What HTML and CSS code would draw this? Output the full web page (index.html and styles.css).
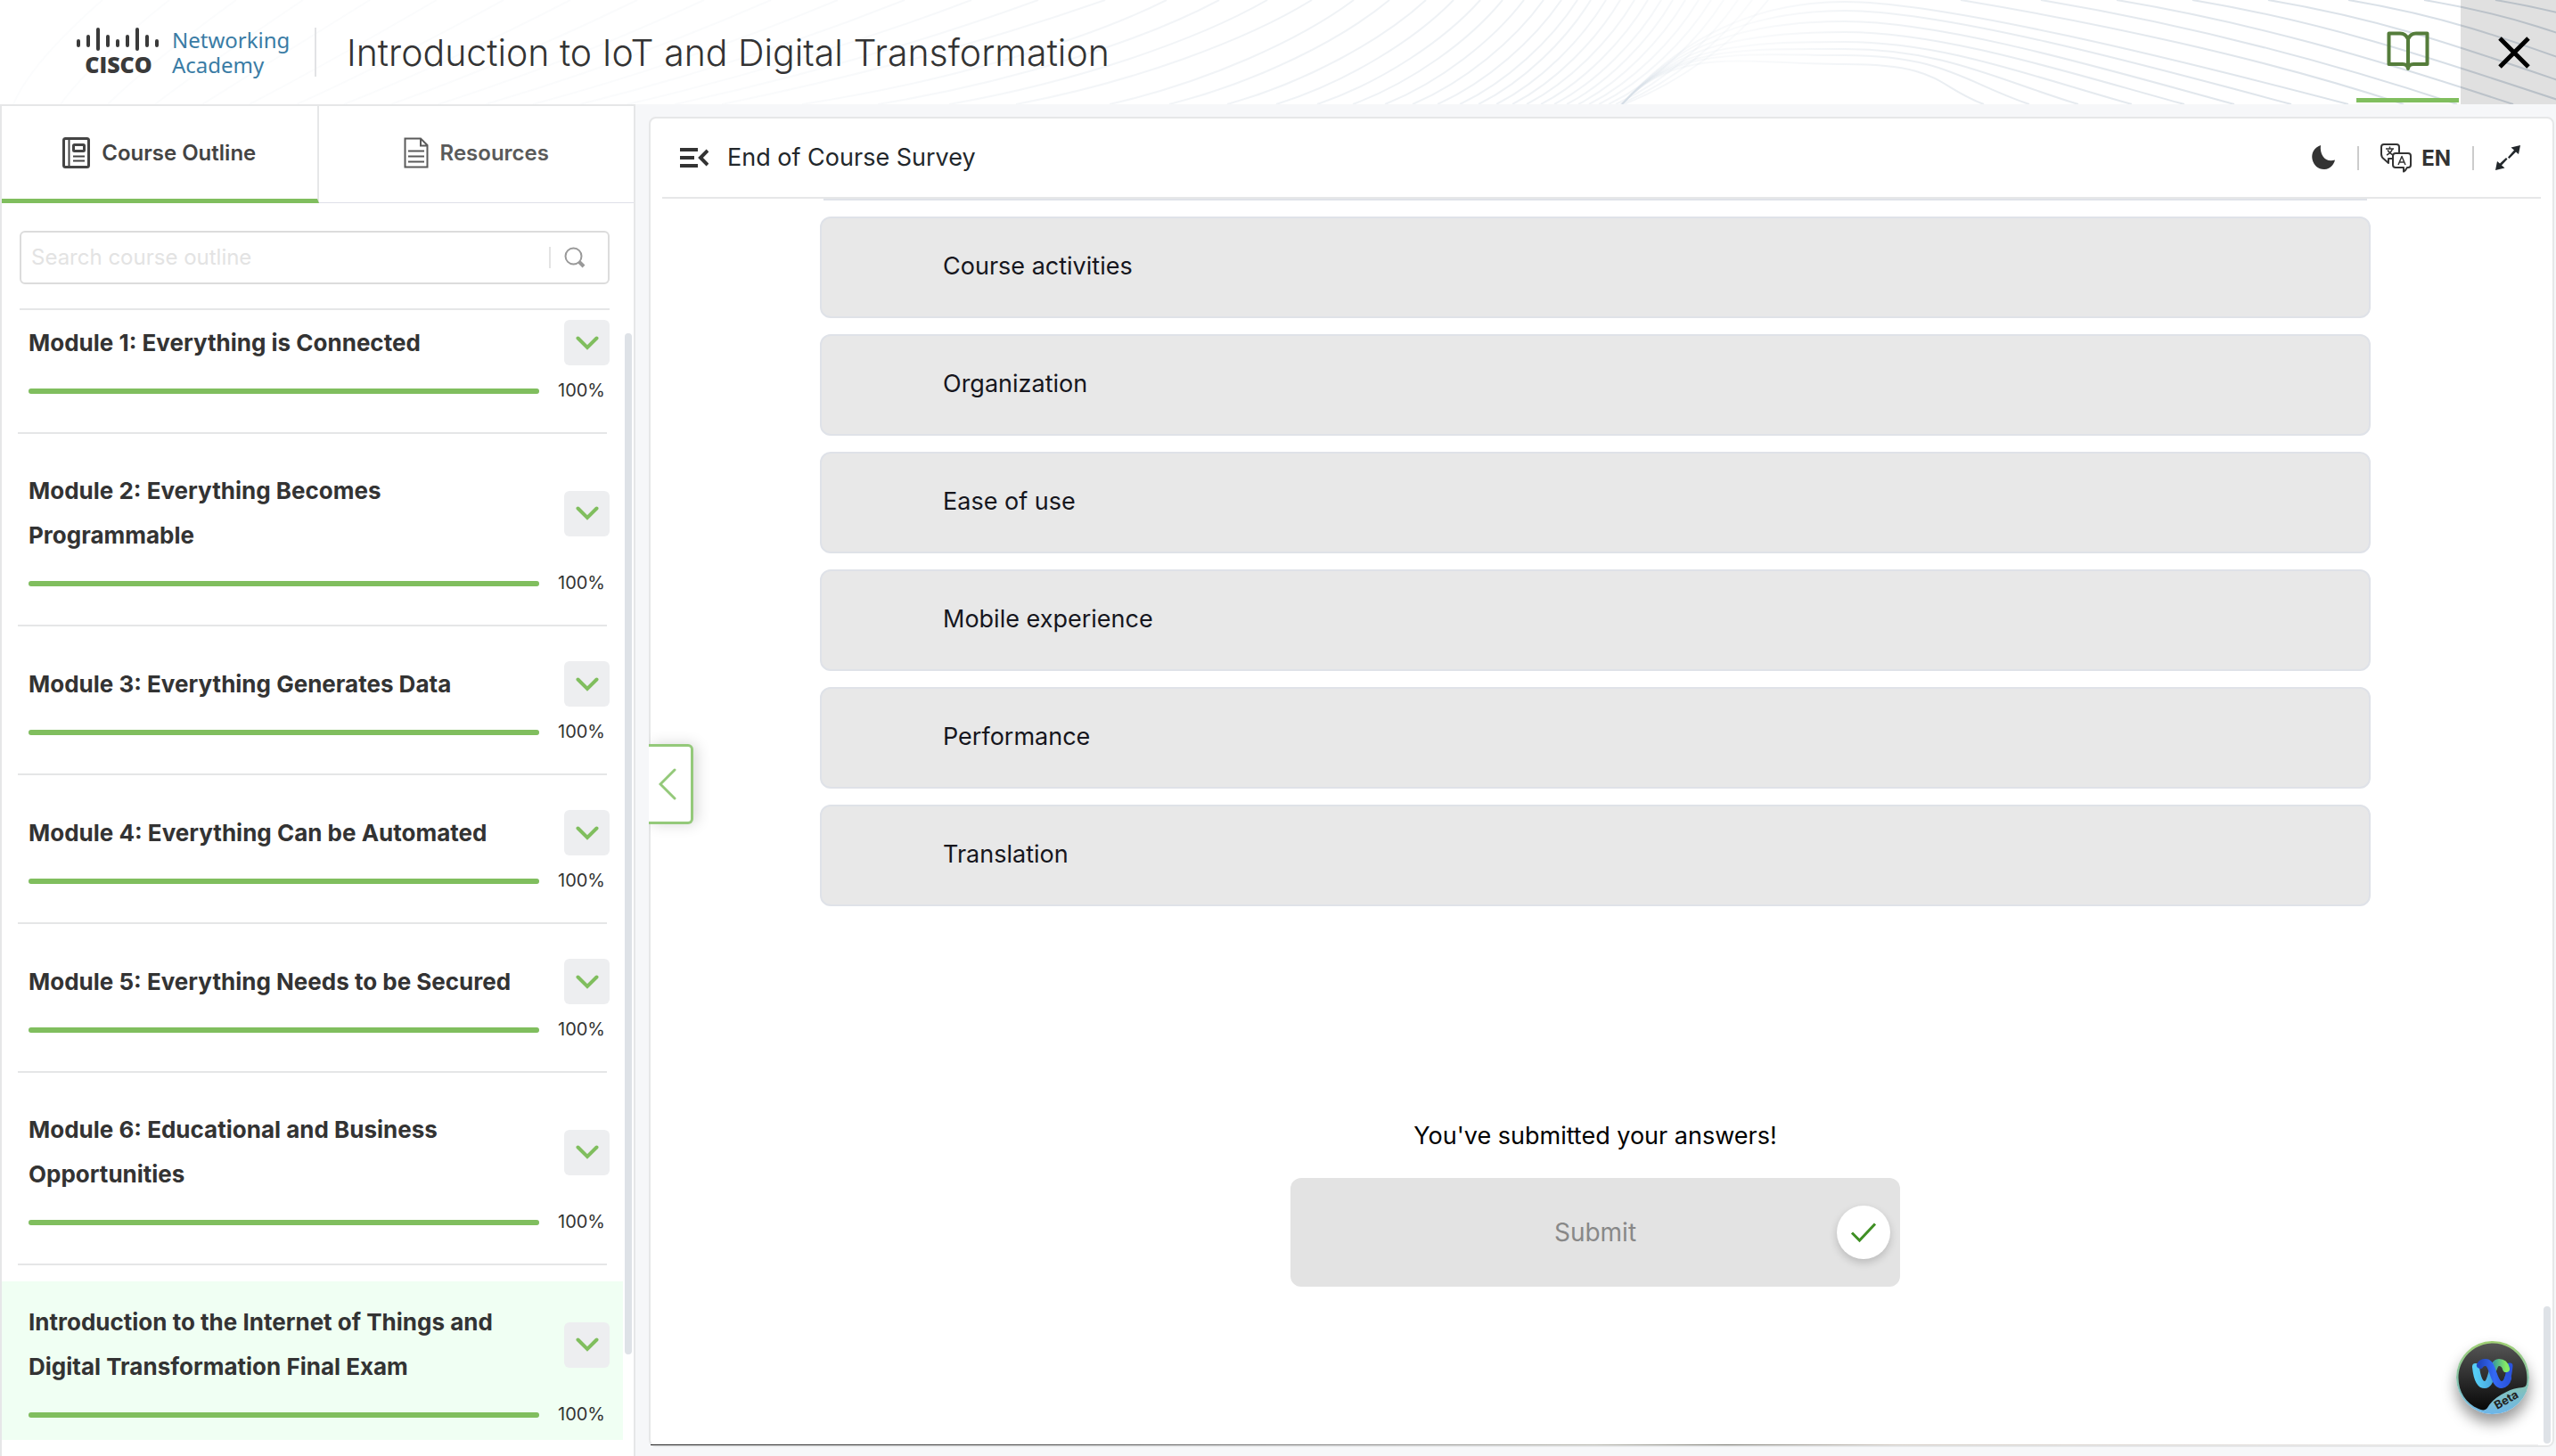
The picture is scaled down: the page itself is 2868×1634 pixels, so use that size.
FILE: index.html
```html
<!DOCTYPE html>
<html lang="en">
<head>
<meta charset="utf-8">
<meta name="viewport" content="width=device-width, initial-scale=1">
<title>Introduction to IoT and Digital Transformation</title>
<link rel="stylesheet" href="styles.css">
</head>
<body>
<svg class="sprite" aria-hidden="true">
  <symbol id="chevron-down" viewBox="0 0 26 16"><path d="M2.500 2.500 13 13 23.500 2.500" fill="none" stroke="currentColor" stroke-width="4" stroke-linecap="round"/></symbol>
</svg>

<header class="topbar">
  <svg class="waves" id="waves" viewBox="0 0 2868 117" preserveAspectRatio="xMaxYMin slice" aria-hidden="true">
    <defs>
      <linearGradient id="fade" gradientUnits="userSpaceOnUse" x1="0" y1="0" x2="2868" y2="0">
        <stop offset="0" stop-color="#d3dce5" stop-opacity=".08"/>
        <stop offset=".3" stop-color="#d3dce5" stop-opacity=".12"/>
        <stop offset=".5" stop-color="#d3dce5" stop-opacity=".35"/>
        <stop offset=".6" stop-color="#d3dce5" stop-opacity=".38"/>
        <stop offset=".68" stop-color="#d3dce5" stop-opacity=".12"/>
        <stop offset=".76" stop-color="#cbd5df" stop-opacity=".4"/>
        <stop offset="1" stop-color="#b4c2d0" stop-opacity=".6"/>
      </linearGradient>
    </defs>
  </svg>
  <a class="brand" href="#" aria-label="Cisco Networking Academy">
    <span class="cisco">
      <svg width="96" height="26" viewBox="0 0 96 26" aria-hidden="true"><path d="M3 15v5M14 10v10M25 2v22M36 10v10M47 15v5M58 10v10M69 2v22M80 10v10M91 15v5" stroke="#3a3a3a" stroke-width="4" stroke-linecap="round"/></svg>
      <span class="cisco-word">CISCO</span>
    </span>
    <span class="academy"><span>Networking</span><span>Academy</span></span>
  </a>
  <h1 class="course-title">Introduction to IoT and Digital Transformation</h1>
  <nav class="top-actions">
    <button class="book" type="button" aria-label="Course content">
      <svg width="48" height="46" viewBox="0 0 48 46" fill="none" stroke="#557d3b" stroke-width="4" stroke-linejoin="round" aria-hidden="true"><path d="M24 9C22 4 19 2.500 15 2.500H2.500V37H18c4 0 5.500 1.500 6 5 .5-3.500 2-5 6-5h15.500V2.500H33C29 2.500 26 4 24 9ZM24 9v33"/></svg>
    </button>
    <button class="close" type="button" aria-label="Close">
      <svg width="36" height="36" viewBox="0 0 36 36" stroke="#000" stroke-width="5" aria-hidden="true"><path d="M2 2 34 34M34 2 2 34"/></svg>
    </button>
  </nav>
</header>

<div class="layout">
  <aside class="sidebar">
    <div class="tabs">
      <button class="tab active" type="button">
        <svg width="31" height="35" viewBox="0 0 31 35" fill="none" stroke="currentColor" stroke-width="2" aria-hidden="true"><rect x="1.500" y="1.500" width="28" height="32" rx="2" stroke-width="3"/><path d="M7.500 1v33M12 21.500h13M12 26.500h13"/><rect x="12.500" y="8.500" width="12" height="7" rx="1" stroke-width="3"/></svg>
        Course Outline
      </button>
      <button class="tab" type="button">
        <svg width="28" height="35" viewBox="0 0 28 35" fill="none" stroke="currentColor" stroke-width="2" aria-hidden="true"><path d="M1.500 1.500H19L26.500 9v24.500h-25ZM19 2v7.500h7" /><path d="M5 15.500h18M5 21.500h18M5 27.500h18"/></svg>
        Resources
      </button>
    </div>
    <form class="search">
      <input type="text" aria-label="Search course outline" placeholder="Search course outline">
      <button type="button" aria-label="Search">
        <svg width="24" height="24" viewBox="0 0 24 24" fill="none" stroke="#999" aria-hidden="true"><circle cx="10.500" cy="10.500" r="9" stroke-width="2"/><path d="m17 17 5 5" stroke-width="4"/></svg>
      </button>
    </form>
    <ul class="modules">
      <li class="module"><div class="module-body">
        <div class="module-head"><h2>Module 1: Everything is Connected</h2><button class="expand" type="button" aria-label="Expand module 1"><svg><use href="#chevron-down"/></svg></button></div>
        <div class="module-progress"><progress value="100" max="100" aria-label="Module 1 progress"></progress><span>100%</span></div>
      </div></li>
      <li class="module"><div class="module-body">
        <div class="module-head"><h2>Module 2: Everything Becomes Programmable</h2><button class="expand" type="button" aria-label="Expand module 2"><svg><use href="#chevron-down"/></svg></button></div>
        <div class="module-progress"><progress value="100" max="100" aria-label="Module 2 progress"></progress><span>100%</span></div>
      </div></li>
      <li class="module"><div class="module-body">
        <div class="module-head"><h2>Module 3: Everything Generates Data</h2><button class="expand" type="button" aria-label="Expand module 3"><svg><use href="#chevron-down"/></svg></button></div>
        <div class="module-progress"><progress value="100" max="100" aria-label="Module 3 progress"></progress><span>100%</span></div>
      </div></li>
      <li class="module"><div class="module-body">
        <div class="module-head"><h2>Module 4: Everything Can be Automated</h2><button class="expand" type="button" aria-label="Expand module 4"><svg><use href="#chevron-down"/></svg></button></div>
        <div class="module-progress"><progress value="100" max="100" aria-label="Module 4 progress"></progress><span>100%</span></div>
      </div></li>
      <li class="module"><div class="module-body">
        <div class="module-head"><h2>Module 5: Everything Needs to be Secured</h2><button class="expand" type="button" aria-label="Expand module 5"><svg><use href="#chevron-down"/></svg></button></div>
        <div class="module-progress"><progress value="100" max="100" aria-label="Module 5 progress"></progress><span>100%</span></div>
      </div></li>
      <li class="module"><div class="module-body">
        <div class="module-head"><h2>Module 6: Educational and Business Opportunities</h2><button class="expand" type="button" aria-label="Expand module 6"><svg><use href="#chevron-down"/></svg></button></div>
        <div class="module-progress"><progress value="100" max="100" aria-label="Module 6 progress"></progress><span>100%</span></div>
      </div></li>
      <li class="module current"><div class="module-body">
        <div class="module-head"><h2>Introduction to the Internet of Things and Digital Transformation Final Exam</h2><button class="expand" type="button" aria-label="Expand final exam"><svg><use href="#chevron-down"/></svg></button></div>
        <div class="module-progress"><progress value="100" max="100" aria-label="Final exam progress"></progress><span>100%</span></div>
      </div></li>
    </ul>
    <span class="side-thumb"></span>
  </aside>

  <main class="card">
    <div class="card-head">
      <button class="icon-btn" type="button" aria-label="Collapse menu">
        <svg width="32" height="24" viewBox="0 0 32 24" fill="none" stroke="#333" stroke-width="4" aria-hidden="true"><path d="M0 3h20M0 12h16M0 21h20"/><path d="m31 4-8 8 8 8"/></svg>
      </button>
      <h2 class="page-title">End of Course Survey</h2>
      <div class="tools">
        <button class="icon-btn" type="button" aria-label="Dark mode">
          <svg width="28" height="30" viewBox="0 0 28 30" aria-hidden="true"><path d="M11 1C3 4 .5 10 1.500 16.500 3 24 9 28.500 15.500 28 21.500 27.500 25.500 23.500 27 17.500 17 21 9.500 12.500 11 1Z" fill="#333"/></svg>
        </button>
        <span class="sep"></span>
        <button class="icon-btn lang" type="button">
          <svg width="35" height="33" viewBox="0 0 35 33" fill="none" stroke="#333" stroke-width="2" stroke-linejoin="round" aria-hidden="true"><path d="M13 17H9v5L4 17.500C2 16 1 14.500 1 12V4c0-2 1-3 3-3h14c2 0 3 1 3 3v6"/><path d="M17 11h14c2 0 3 1 3 3v10c0 2-1 3-3 3h-1c-1 2-2 3.500-4 4.500V27h-9c-2 0-3-1-3-3V14c0-2 1-3 3-3Z"/><path d="M6 6h9M10.500 3.500V6M13.500 6c-1 3-3.500 5.500-6.500 7M8 7.500c1.500 2.500 3.500 4 6 5.500M20 24l4-9.500 4 9.500M21.500 21h5" stroke-width="1.500"/></svg>
          EN
        </button>
        <span class="sep"></span>
        <button class="icon-btn" type="button" aria-label="Full screen">
          <svg width="28" height="28" viewBox="0 0 28 28" fill="#22272b" aria-hidden="true"><path d="M28 0 26 10 23 7.500 15.500 15 14 13.500 21 5.500 17.500 2.500ZM0 28 2 18 5 20.500 12 14 13.500 15.500 7 22.500 10.500 25.500Z"/></svg>
        </button>
      </div>
    </div>
    <div class="scroll">
      <ul class="answers">
        <li class="peek"></li>
        <li>Course activities</li>
        <li>Organization</li>
        <li>Ease of use</li>
        <li>Mobile experience</li>
        <li>Performance</li>
        <li>Translation</li>
      </ul>
      <div class="result">
        <p>You've submitted your answers!</p>
        <button class="submit" type="button" disabled>
          Submit
          <span class="check"><svg width="30" height="24" viewBox="0 0 30 24" fill="none" stroke="#3f8f24" stroke-width="3" aria-hidden="true"><path d="M2 12.500 10.500 21 28 2.500"/></svg></span>
        </button>
      </div>
    </div>
    <button class="drawer" type="button" aria-label="Previous page">
      <svg width="20" height="36" viewBox="0 0 20 36" fill="none" stroke="#94c97a" stroke-width="3" stroke-linecap="round" aria-hidden="true"><path d="M18 2 2 18 18 34"/></svg>
    </button>
    <span class="main-thumb"></span>
    <button class="assistant" type="button" aria-label="Webex assistant, Beta">
      <svg width="82" height="82" viewBox="0 0 82 82" aria-hidden="true">
        <defs>
          <linearGradient id="ring" x1="0" y1="0" x2="0" y2="1"><stop offset="0" stop-color="#9fcf72"/><stop offset=".6" stop-color="#86c3b4"/><stop offset="1" stop-color="#6db6ea"/></linearGradient>
          <linearGradient id="disc" x1="0" y1="0" x2="0" y2="1"><stop offset="0" stop-color="#555"/><stop offset="1" stop-color="#080808"/></linearGradient>
          <linearGradient id="cyan" x1="0" y1="0" x2="1" y2="0"><stop offset="0" stop-color="#56cdf5"/><stop offset=".5" stop-color="#4aa9e0"/><stop offset=".6" stop-color="#3d9f98"/><stop offset="1" stop-color="#86ea64"/></linearGradient>
          <linearGradient id="blue" x1="0" y1="0" x2="1" y2="0"><stop offset="0" stop-color="#2248c0"/><stop offset=".5" stop-color="#3469f5"/><stop offset="1" stop-color="#2b55dc"/></linearGradient>
        </defs>
        <circle cx="41" cy="41" r="41" fill="url(#ring)"/>
        <path d="M41 2.500C62 2.500 79.500 20 79.500 41c0 4 0 8-2 10-3 2-9 0-21 6C46 62 39 68 35 75c-2 3-6 3-10 1C11 70 2.500 57 2.500 41 2.500 20 20 2.500 41 2.500Z" fill="url(#disc)"/>
        <g fill="none" stroke-width="8" stroke-linecap="round">
          <path d="M60 28C59 39 57 49 51 49" stroke="#2b55dc" stroke-width="7"/>
          <path d="M22 29C23 39 26 49 32 49 41 49 39 24 48 24 53 24 55 27 56 31" stroke="url(#cyan)"/>
          <path d="M27 27C28 25 30 24 33 24 42 24 41 49 51 49 54 49 57 46 58 42" stroke="url(#blue)"/>
        </g>
        <text class="beta" x="0" y="0" transform="translate(46 77) rotate(-30)">Beta</text>
      </svg>
    </button>
  </main>
</div>
<script src="waves.js"></script>
</body>
</html>
```
FILE: styles.css
```css
* { box-sizing: border-box; }
body {
  margin: 0;
  height: 100vh;
  display: flex;
  flex-direction: column;
  overflow: hidden;
  background: #f6f7f9;
  color: #333;
  font-family: Inter, "Liberation Sans", sans-serif;
  font-size: 27px;
}
h1, h2, p, ul { margin: 0; padding: 0; font-weight: 400; }
ul { list-style: none; }
button { border: 0; padding: 0; background: none; color: inherit; font: inherit; }
svg { display: block; flex: none; }
.sprite { position: absolute; width: 0; height: 0; }

/* Top bar */
.topbar {
  position: relative;
  flex: none;
  display: flex;
  align-items: center;
  height: 117px;
  background: #fff;
}
.waves { position: absolute; inset: 0; width: 100%; height: 100%; }
.brand {
  position: relative;
  display: flex;
  gap: 12px;
  height: 55px;
  margin-left: 85px;
  padding-right: 28px;
  border-right: 2px solid #e2e3e5;
  color: #3a7ca5;
  text-decoration: none;
}
.cisco { display: flex; flex-direction: column; align-items: center; width: 96px; }
.cisco-word { color: #3a3a3a; font: 800 25px/30px "Open Sans", sans-serif; }
.academy { display: flex; flex-direction: column; width: 132px; font: 400 24px/28px "Noto Sans", sans-serif; }
.course-title {
  position: relative;
  flex: 1;
  padding-left: 34px;
  font-size: 41px;
  font-weight: 300;
  line-height: 48px;
  white-space: nowrap;
}
.top-actions { position: relative; display: flex; align-self: stretch; gap: 2px; }
.book {
  display: flex;
  justify-content: center;
  align-items: center;
  width: 115px;
  height: 115px;
  padding-top: 5px;
  border-bottom: 5px solid #80be5e;
}
.close {
  display: flex;
  justify-content: center;
  align-items: center;
  width: 107px;
  padding-left: 13px;
  background: rgba(0, 0, 0, .12);
}

/* Layout */
.layout { flex: 1; min-height: 0; display: flex; }
.sidebar {
  position: relative;
  flex: 0 0 713px;
  display: flex;
  flex-direction: column;
  overflow: hidden;
  border: 2px solid #e6e7e8;
  border-bottom: 0;
  background: #fff;
}
.tabs { display: flex; flex: none; height: 109px; }
.tab {
  flex: 1;
  display: flex;
  justify-content: center;
  align-items: center;
  gap: 13px;
  padding-bottom: 4px;
  border-bottom: 1px solid #dfe0e8;
  color: #5a5a5a;
  font-size: 24px;
  font-weight: 600;
}
.tab.active {
  padding-bottom: 0;
  border-right: 2px solid #e6e7e8;
  border-bottom: 5px solid #80be5e;
  color: #444;
}
.search {
  flex: none;
  display: flex;
  align-items: center;
  height: 60px;
  margin: 31px 27px 27px 20px;
  border: 2px solid #dcdcdc;
  border-radius: 6px;
}
.search input {
  flex: 1;
  min-width: 0;
  padding: 0 0 0 11px;
  border: 0;
  outline: 0;
  background: none;
  font: 400 24px/32px Inter, sans-serif;
}
.search input::placeholder { color: #e3e3e3; opacity: 1; }
.search button { height: 24px; padding: 0 25px 0 15px; border-left: 2px solid #e3e3e3; }

/* Modules */
.modules { flex: 1; min-height: 0; overflow: hidden; }
.module::before, .module:not(:last-child)::after {
  content: "";
  display: block;
  height: 2px;
  margin: 0 30px 0 18px;
  background: #e5e6e7;
}
.module:not(:first-child)::before { display: none; }
.module:first-child::before { margin: 0 27px 0 20px; }
.module-body { margin: 18px 12px 18px 0; padding: 21px 15px 25px 30px; }
.module:first-child .module-body { margin-top: 0; padding-top: 11px; }
.module.current .module-body { background: #f0fff3; }
.module-head { display: flex; align-items: center; justify-content: space-between; min-height: 51px; }
.module h2 { width: 560px; font-size: 26px; font-weight: 700; line-height: 50px; }
.expand {
  flex: none;
  display: flex;
  justify-content: center;
  align-items: center;
  width: 51px;
  height: 51px;
  border-radius: 6px;
  background: #edeef0;
  color: #80be5e;
}
.expand svg { width: 26px; height: 16px; }
.module-progress { display: flex; align-items: center; gap: 21px; height: 6px; margin-top: 26px; }
progress {
  appearance: none;
  width: 573px;
  height: 6px;
  border: 0;
}
progress::-webkit-progress-bar { border-radius: 3px; background: #e5e6e7; }
progress::-webkit-progress-value { border-radius: 3px; background: #80be5e; }
.module-progress span { padding-bottom: 2px; font-size: 20px; line-height: 24px; }
.side-thumb {
  position: absolute;
  top: 255px;
  right: 2px;
  width: 8px;
  height: 1146px;
  border-radius: 4px;
  background: #dee2e7;
}

/* Content card */
.card {
  position: relative;
  flex: 1;
  min-width: 0;
  display: flex;
  flex-direction: column;
  margin: 14px 2px 10px 15px;
  border: 2px solid #e6e7e8;
  border-radius: 8px;
  background: #fff;
}
.card::after {
  content: "";
  position: absolute;
  left: 0;
  right: 16px;
  bottom: 0;
  height: 1px;
  background: linear-gradient(90deg, #222 0, #444 20%, #888 38%, #b5b5ac 50%, #77776f 57%, #d0c8c0 66%, #eee 100%);
}
.card-head {
  flex: none;
  display: flex;
  align-items: center;
  height: 90px;
  margin: 0 13px;
  padding: 0 23px 0 20px;
  border-bottom: 2px solid #e6e7e8;
}
.icon-btn { display: flex; align-items: center; gap: 11px; }
.page-title { padding-left: 21px; color: #22272b; font-size: 27px; line-height: 36px; }
.tools { display: flex; align-items: center; gap: 24px; margin-left: auto; }
.sep { width: 2px; height: 27px; background: #ccc; }
.lang { font-size: 24px; font-weight: 700; }
.scroll { flex: 1; min-height: 0; overflow: hidden; padding: 0 204px 0 190px; }
.answers { display: flex; flex-direction: column; gap: 18px; }
.answers li {
  height: 114px;
  padding-left: 136px;
  border: 2px solid #dfe2e8;
  border-radius: 12px;
  background: #e8e8e8;
  color: #16161d;
  line-height: 108px;
}
.answers .peek { height: 2px; margin: 0 4px; padding: 0; border-width: 0 0 2px; border-radius: 0; }
.result { display: flex; flex-direction: column; align-items: center; padding-top: 240px; color: #000; }
.result p { line-height: 36px; }
.submit {
  position: relative;
  width: 684px;
  height: 122px;
  margin-top: 29px;
  border-radius: 12px;
  background: #e3e3e3;
  color: #888;
  font-size: 28px;
}
.check {
  position: absolute;
  top: 31px;
  right: 11px;
  display: flex;
  justify-content: center;
  align-items: center;
  width: 60px;
  height: 60px;
  border-radius: 50%;
  background: #fff;
  box-shadow: 0 4px 10px rgba(0, 0, 0, .18);
}
.drawer {
  position: absolute;
  top: 702px;
  left: -2px;
  display: flex;
  align-items: center;
  width: 50px;
  height: 90px;
  padding-left: 11px;
  border: 3px solid #94c97a;
  border-left: 0;
  border-radius: 0 6px 6px 0;
  background: #fff;
  box-shadow: 4px 0 16px rgba(0, 0, 0, .16);
  clip-path: inset(-30px -30px -30px 0);
}
.main-thumb {
  position: absolute;
  right: 2px;
  bottom: 2px;
  width: 8px;
  height: 154px;
  border-radius: 4px;
  background: #dee2e7;
}
.assistant {
  position: absolute;
  right: 26px;
  bottom: 35px;
  border-radius: 50%;
  box-shadow: 0 10px 16px rgba(0, 0, 0, .4);
}
.beta { fill: #222; font: 700 13px Inter, sans-serif; }
```
FILE: waves.js
```js
// Draws the decorative line pattern behind the top bar.
const svg = document.getElementById("waves");
const lines = [];

// Left sweep: each pair is where a line meets the top and the bottom edge.
const sweep = [
  [1309, 900], [1368, 985], [1422, 1065], [1472, 1140], [1519, 1245], [1559, 1312], [1600, 1377],
  [1631, 1432], [1661, 1478], [1686, 1518], [1710, 1554], [1732, 1585], [1752, 1613],
  [1770, 1638], [1785, 1659], [1802, 1679], [1818, 1697], [1834, 1713], [1849, 1729],
  [1864, 1744], [1877, 1758], [1891, 1771], [1906, 1783], [1920, 1794], [1934, 1805],
  [1950, 1813], [1966, 1818], [1984, 1822]
];
for (const [top, bottom] of sweep) {
  const span = top - bottom;
  lines.push(`M${top} 0C${top - span * 0.22} 45 ${bottom + span * 0.4} 92 ${bottom} 117`);
}
for (let i = 0; i < 16; i++) {
  const top = 1240 - i * 75;
  lines.push(`M${top} 0Q${top - 200 + i * 8} 70 ${top - 430 + i * 22} 117`);
}

// Fan that leaves the pinch point and falls away to the right.
const fan = [[2635, 2], [2571, 12], [2507, 24], [2451, 36], [2392, 47], [2332, 55], [2277, 62], [2226, 72]];
for (const [end, crest] of fan) {
  const run = (end - 2070) * 0.35;
  const rise = (117 - crest) * 0.45;
  lines.push(`M1820 117C1880 50 1960 ${crest} 2070 ${crest}S${end - run} ${117 - rise} ${end} 117`);
}

// Lines that enter from the top on the right.
const right = [[2200, 2697], [2290, 2757], [2375, 2820], [2460, 2885], [2545, 2950], [2635, 3020], [2720, 3090], [2800, 3160]];
for (const [top, bottom] of right) {
  lines.push(`M${top} 0C${top + 150} 25 ${bottom - 160} 64 ${bottom} 117`);
}

for (const d of lines) {
  const path = document.createElementNS("http://www.w3.org/2000/svg", "path");
  path.setAttribute("d", d);
  path.setAttribute("fill", "none");
  path.setAttribute("stroke", "url(#fade)");
  path.setAttribute("stroke-width", "2");
  svg.appendChild(path);
}
```
